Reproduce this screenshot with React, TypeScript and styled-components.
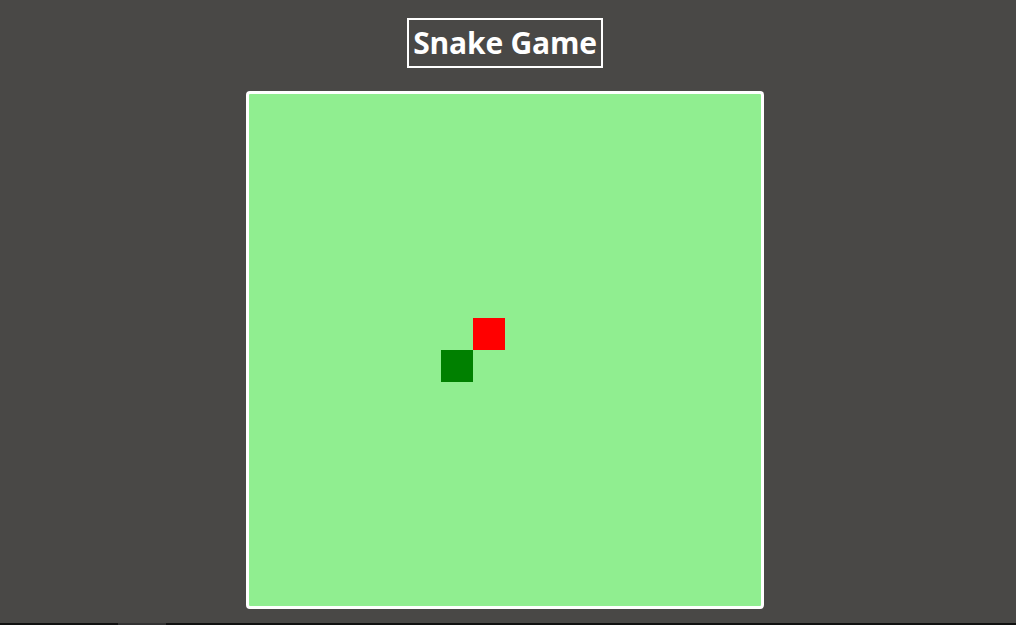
import React from "react";
import styled, { createGlobalStyle } from "styled-components";

const Global = createGlobalStyle`
  html, body { margin: 0; padding: 0; height: 100%; }
  body { background: #494846; font-family: "Open Sans", "DejaVu Sans", sans-serif; overflow: hidden; }
  #root { height: 100%; }
`;

const Page = styled.div`
  height: 100vh;
  display: flex;
  flex-direction: column;
`;

const Main = styled.main`
  flex: 1;
  display: flex;
  flex-direction: column;
  align-items: center;
  gap: 23px;
  padding: 18px 6px 0 0;
`;

const Title = styled.h1`
  margin: 0;
  box-sizing: border-box;
  height: 50px;
  width: 196px;
  border: 2px solid #ffffff;
  color: #ffffff;
  font-family: "Open Sans", sans-serif;
  font-weight: 700;
  font-size: 30px;
  line-height: 45px;
  letter-spacing: -0.2px;
  text-align: center;
  white-space: nowrap;
`;

const CELL = 32;
const N = 16;

const Board = styled.div`
  width: ${CELL * N}px;
  height: ${CELL * N}px;
  border: 3px solid #ffffff;
  border-radius: 4px;
  background: #90ee90;
  display: grid;
  grid-template-columns: repeat(${N}, ${CELL}px);
  grid-template-rows: repeat(${N}, ${CELL}px);
`;

const Cell = styled.div<{ $kind: "snake" | "food"; $x: number; $y: number }>`
  grid-column: ${(p) => p.$x + 1};
  grid-row: ${(p) => p.$y + 1};
  background: ${(p) => (p.$kind === "snake" ? "#008000" : "#ff0000")};
`;

const Strip = styled.div`
  height: 2px;
  background: #111111;
  display: flex;
  padding-left: 118px;
`;

const Thumb = styled.div`
  width: 48px;
  background: #333333;
`;

export default function App() {
  return (
    <Page>
      <Global />
      <Main>
        <Title>Snake Game</Title>
        <Board>
          <Cell $kind="food" $x={7} $y={7} />
          <Cell $kind="snake" $x={6} $y={8} />
        </Board>
      </Main>
      <Strip>
        <Thumb />
      </Strip>
    </Page>
  );
}
